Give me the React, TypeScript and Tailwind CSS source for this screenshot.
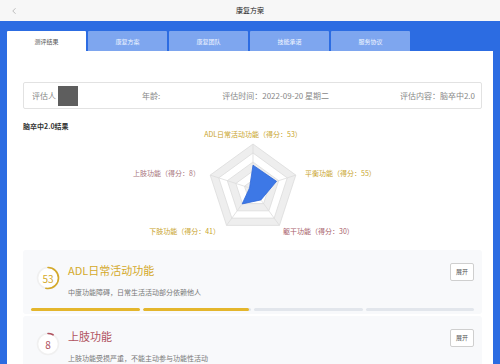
import { ChevronLeft } from "lucide-react";

const tabs = ["测评结果", "康复方案", "康复团队", "技能承诺", "服务协议"];

const axes = [
  { label: "ADL日常活动功能（得分：53）", value: 53, color: "#c9a42a", x: 230, y: 9, anchor: "middle" },
  { label: "平衡功能（得分：55）", value: 55, color: "#c9a42a", x: 282, y: 48, anchor: "start" },
  { label: "躯干功能（得分：30）", value: 30, color: "#a8606a", x: 260, y: 106, anchor: "start" },
  { label: "下肢功能（得分：41）", value: 41, color: "#c9a42a", x: 197, y: 106, anchor: "end" },
  { label: "上肢功能（得分：8）", value: 8, color: "#a8747c", x: 177, y: 48, anchor: "end" },
];

const CX = 230;
const CY = 61;
const R = 45;

const point = (i: number, r: number) => {
  const a = ((-90 + i * 72) * Math.PI) / 180;
  return [CX + r * Math.cos(a), CY + r * Math.sin(a)];
};

const ring = (r: number) => [0, 1, 2, 3, 4].map((i) => point(i, r).join(",")).join(" ");

const RadarChart = () => (
  <svg width="459" height="112" viewBox="0 0 459 112" className="block">
    {[5, 4, 3, 2, 1].map((lv) => (
      <polygon
        key={lv}
        points={ring((R * lv) / 5)}
        fill={lv % 2 === 1 ? "#eeeeee" : "#ffffff"}
        stroke="#dcdcdc"
        strokeWidth="0.8"
      />
    ))}
    {[0, 1, 2, 3, 4].map((i) => (
      <line key={i} x1={CX} y1={CY} x2={point(i, R)[0]} y2={point(i, R)[1]} stroke="#dcdcdc" strokeWidth="0.8" />
    ))}
    <polygon
      points={axes.map((a, i) => point(i, (R * a.value) / 100).join(",")).join(" ")}
      fill="#3d78e6"
      stroke="#2f67d8"
      strokeWidth="0.8"
    />
    {axes.map((a) => (
      <text
        key={a.label}
        x={a.x}
        y={a.y}
        textAnchor={a.anchor as "start" | "middle" | "end"}
        fontSize="7"
        fill={a.color}
        fontFamily="'Noto Sans CJK SC', sans-serif"
      >
        {a.label}
      </text>
    ))}
  </svg>
);

const ScoreRing = ({ score, color }: { score: number; color: string }) => {
  const r = 10.5;
  const c = 2 * Math.PI * r;
  return (
    <div className="relative w-[24px] h-[24px] shrink-0">
      <svg width="24" height="24" viewBox="0 0 24 24" className="absolute inset-0">
        <circle cx="12" cy="12" r={r} fill="#ffffff" stroke="#f0f0f0" strokeWidth="1.6" />
        <circle
          cx="12"
          cy="12"
          r={r}
          fill="none"
          stroke={color}
          strokeWidth="1.6"
          strokeLinecap="round"
          strokeDasharray={`${(c * score) / 100} ${c}`}
          transform="rotate(-90 12 12)"
        />
      </svg>
      <div className="absolute inset-0 flex items-center justify-center text-[10px]" style={{ color }}>
        {score}
      </div>
    </div>
  );
};

const ResultCard = ({
  score,
  color,
  title,
  desc,
  bar,
}: {
  score: number;
  color: string;
  title: string;
  desc: string;
  bar?: boolean;
}) => (
  <div className="bg-[#f8f9fb] rounded-[3px] px-[8px] pt-[13px] pb-[3px]">
    <div className="flex items-start">
      <div className="pt-[3px] pl-[5px]">
        <ScoreRing score={score} color={color} />
      </div>
      <div className="ml-[8px] flex-1">
        <div className="text-[11px] leading-[14px]" style={{ color }}>
          {title}
        </div>
        <div className="text-[7px] leading-[10px] text-[#777] mt-[10px]">{desc}</div>
      </div>
      <div className="border border-[#cfcfcf] rounded-[2px] bg-white text-[6px] text-[#555] px-[5px] py-[3px] leading-[10px]">
        展开
      </div>
    </div>
    {bar && (
      <div className="flex gap-[3px] mt-[11px]">
        <div className="flex-1 h-[3px] rounded-full bg-[#e4b62c]" />
        <div className="flex-1 h-[3px] rounded-full bg-[#e2e6ec] overflow-hidden">
          <div className="h-full w-[98%] bg-[#e4b62c] rounded-full" />
        </div>
        <div className="flex-1 h-[3px] rounded-full bg-[#e2e6ec]" />
        <div className="flex-1 h-[3px] rounded-full bg-[#e2e6ec]" />
      </div>
    )}
  </div>
);

export default function App() {
  return (
    <div
      className="w-[500px] h-[364px] overflow-hidden flex flex-col bg-white"
      style={{ fontFamily: "'Noto Sans CJK SC', 'Noto Sans', sans-serif" }}
    >
      {/* Header */}
      <div className="h-[21px] shrink-0 flex items-center relative bg-[#f7f7f7]">
        <ChevronLeft className="w-[10px] h-[10px] text-[#999] ml-[9px]" strokeWidth={1.5} />
        <div className="absolute inset-0 flex items-center justify-center text-[7px] text-[#222]">康复方案</div>
      </div>

      {/* Blue frame */}
      <div className="flex-1 bg-[#2c6ce2] px-[7px] pt-[10px] flex flex-col">
        <div className="flex gap-[2px] h-[20px]">
          {tabs.map((t, i) => (
            <div
              key={t}
              className={`w-[79px] flex items-center justify-center text-[6px] rounded-t-[1px] ${
                i === 0 ? "bg-white text-[#555]" : "bg-[#7ea6ef] text-[#f2f6ff]"
              }`}
            >
              {t}
            </div>
          ))}
        </div>

        <div className="flex-1 bg-white pl-[16px] pr-[11px] pt-[31px]">
          {/* Info box */}
          <div className="h-[27px] border border-[#e2e2e2] rounded-[2px] flex items-center text-[8px] text-[#888]">
            <span className="ml-[8px]">评估人</span>
            <div className="w-[20px] h-[20px] bg-[#5e5e5e] ml-[2px]" />
            <span className="ml-[64px]">年龄:</span>
            <span className="ml-[62px]">评估时间：2022-09-20 星期二</span>
            <span className="ml-auto mr-[6px]">评估内容：脑卒中2.0</span>
          </div>

          <div className="text-[7px] font-bold text-[#333] mt-[12px] leading-[10px]">脑卒中2.0结果</div>

          <div className="mt-[-3px]">
            <RadarChart />
          </div>

          <div className="mt-[10px] flex flex-col gap-[2px]">
            <ResultCard
              score={53}
              color="#d4a92a"
              title="ADL日常活动功能"
              desc="中度功能障碍，日常生活活动部分依赖他人"
              bar
            />
            <ResultCard
              score={8}
              color="#b0525f"
              title="上肢功能"
              desc="上肢功能受损严重，不能主动参与功能性活动"
            />
          </div>
        </div>
      </div>
    </div>
  );
}
